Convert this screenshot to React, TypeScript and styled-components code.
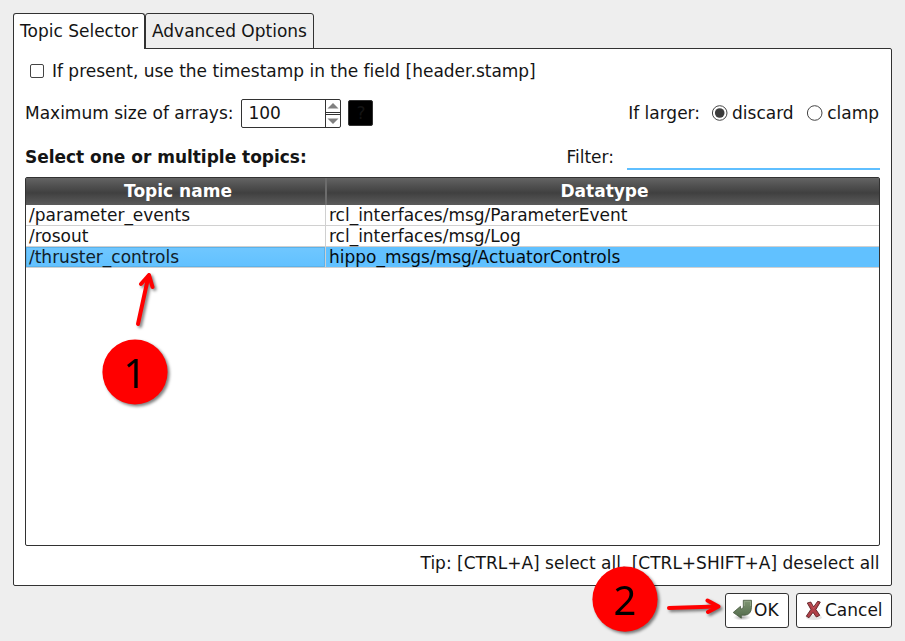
import React from "react";
import styled, { createGlobalStyle, css } from "styled-components";

const GlobalStyle = createGlobalStyle`
  * { box-sizing: border-box; }
  body {
    margin: 0;
    background: #eee;
    font-family: "DejaVu Sans", sans-serif;
    font-size: 17px;
    line-height: 20px;
    color: #141414;
  }
`;

const line = "#323232";

const Dialog = styled.main`
  position: relative;
  width: 905px;
  height: 641px;
  padding: 13px 13px 0;
  display: flex;
  flex-direction: column;
  white-space: nowrap;
  overflow: hidden;
`;

const TabBar = styled.div`
  display: flex;
  height: 36px;
  margin-bottom: -1px;
`;

const Tab = styled.div<{ $active?: boolean }>`
  width: ${(p) => (p.$active ? 132 : 169)}px;
  height: 36px;
  padding: 7px 0 0 6px;
  border: 1px solid ${line};
  border-radius: 3px 3px 0 0;
  ${(p) =>
    p.$active
      ? css`
          background: #fff;
          border-bottom: 0;
          z-index: 1;
        `
      : css`
          background: #eee;
        `}
`;

const Panel = styled.section`
  width: 879px;
  height: 538px;
  padding: 12px 11px 0;
  background: #fff;
  border: 1px solid ${line};
  border-radius: 0 2px 2px 2px;
  display: flex;
  flex-direction: column;
`;

const StampRow = styled.label`
  display: flex;
  align-items: center;
  height: 20px;
  padding-left: 5px;
  gap: 8px;
  letter-spacing: -0.01px;
`;

const CheckBox = styled.span`
  width: 14px;
  height: 14px;
  border: 1px solid #444;
  border-radius: 2px;
`;

const SizeRow = styled.div`
  display: flex;
  align-items: center;
  height: 30px;
  margin-top: 17px;
`;

const SpinBox = styled.div`
  display: flex;
  width: 100px;
  height: 29px;
  margin-left: 8px;
  border: 1px solid ${line};
  border-radius: 2px;
`;

const SpinValue = styled.span`
  flex: 1;
  padding: 3px 0 0 6px;
`;

const Stepper = styled.span`
  display: flex;
  flex-direction: column;
  justify-content: space-between;
  width: 15px;
  border-left: 1px solid ${line};
`;

const Step = styled.span<{ $down?: boolean }>`
  display: flex;
  align-items: center;
  justify-content: center;
  height: 13px;
  border-${(p) => (p.$down ? "top" : "bottom")}: 1px solid ${line};
`;

const HelpButton = styled.span`
  width: 25px;
  height: 26px;
  margin-left: 7px;
  background: #000;
  border: 1px solid #323232;
  border-radius: 2px;
  color: #141414;
  text-align: center;
  line-height: 24px;
`;

const RadioGroup = styled.div`
  display: flex;
  align-items: center;
  margin-left: auto;
  padding-right: 1px;
`;

const Radio = styled.span<{ $gap: number }>`
  display: flex;
  align-items: center;
  gap: 4px;
  margin-left: ${(p) => p.$gap}px;
`;

const FilterRow = styled.div`
  display: flex;
  height: 27px;
  margin-top: 15px;
  padding-top: 4px;
`;

const Title = styled.strong`
  flex: 1;
  letter-spacing: -0.02px;
`;

const FilterField = styled.div`
  width: 253px;
  height: 27px;
  margin: -4px 0 0 13px;
  border-bottom: 2px solid #5fbfff;
`;

const Table = styled.div`
  width: 855px;
  height: 369px;
  margin-top: 7px;
  border: 1px solid ${line};
  border-radius: 2px;
`;

const HeaderRow = styled.div`
  display: grid;
  grid-template-columns: 300px 1fr;
  height: 27px;
  background: linear-gradient(#646464 0, #565656 20%, #404040 55%, #5b5b5b 100%);
  color: #fff;
  font-weight: bold;
  text-align: center;
`;

const HeaderCell = styled.span`
  padding: 3px 0 0 4px;
  & + & {
    margin-left: -1px;
    padding-left: 3px;
    border-left: 2px solid #6c6c6c;
  }
`;

const Row = styled.div<{ $selected?: boolean }>`
  display: grid;
  grid-template-columns: 300px 1fr;
  height: 21px;
  border-bottom: 1px solid #d0d0d0;
  background: ${(p) => (p.$selected ? "#61c1ff" : "#fff")};
  color: ${(p) => (p.$selected ? "#050b10" : "#141414")};
  letter-spacing: -0.01px;
`;

const Cell = styled.span<{ $focus?: boolean }>`
  height: 20px;
  padding-left: 3px;
  &:first-child {
    border-right: 1px solid #d0d0d0;
  }
  ${(p) =>
    p.$focus &&
    css`
      color: #10202a;
      background: linear-gradient(#70c7ff, #61c1ff);
      box-shadow: inset 0 0 0 1px #5ab2ea;
    `}
`;

const Tip = styled.p`
  margin: 7px 0.5px 0 0;
  text-align: right;
`;

const Footer = styled.div`
  display: flex;
  justify-content: flex-end;
  gap: 7px;
  margin-top: 7px;
`;

const Button = styled.button<{ $width: number }>`
  display: flex;
  align-items: center;
  width: ${(p) => p.$width}px;
  height: 35px;
  padding: 0 0 1px 6px;
  gap: 1px;
  background: #fff;
  border: 1px solid ${line};
  border-radius: 3px;
  font: inherit;
  color: inherit;
`;

const Annotation = styled.svg`
  position: absolute;
  left: 0;
  top: 0;
  pointer-events: none;
  filter: drop-shadow(2px 2px 1.5px rgba(0, 0, 0, 0.5));
`;

const BadgeNumber = styled.text`
  font: 40px "Noto Sans", sans-serif;
  text-anchor: middle;
`;

const Badge = ({ x, y, n }: { x: number; y: number; n: number }) => (
  <g>
    <circle cx={x} cy={y} r="32.6" fill="#f00" />
    <BadgeNumber x={x} y={y + 16}>{n}</BadgeNumber>
  </g>
);

const RadioDot = ({ checked }: { checked?: boolean }) => (
  <svg width="16" height="16" viewBox="0 0 16 16">
    <circle cx="7.7" cy="8" r="7.3" fill="#fff" stroke="#444" />
    {checked && <circle cx="7.7" cy="8" r="4.8" fill="#3c3c3c" />}
  </svg>
);

const Triangle = ({ down }: { down?: boolean }) => (
  <svg width="12" height="6" viewBox="0 0 12 6">
    <path d={down ? "M.5 .5H11.5L6 6Z" : "M.5 5.5H11.5L6 0Z"} fill="#808080" />
  </svg>
);

const OkIcon = () => (
  <svg width="21" height="22" viewBox="0 0 21 22">
    <defs>
      <linearGradient id="green" x1="0" y1="0" x2="0" y2="1">
        <stop offset="0" stopColor="#7f9673" />
        <stop offset="1" stopColor="#51694a" />
      </linearGradient>
      <radialGradient id="shade">
        <stop offset="0" stopColor="#777" stopOpacity=".7" />
        <stop offset="1" stopColor="#999" stopOpacity="0" />
      </radialGradient>
    </defs>
    <ellipse cx="10" cy="18.5" rx="9" ry="3" fill="url(#shade)" />
    <path
      d="M11.3 1.3H19.5V8.5Q19 15.8 13 16.2H9.3V19.2L1.2 13.5L8.5 7.3V9.8H9.8Q11 9.6 11.3 8Z"
      fill="url(#green)"
      stroke="#46583f"
      strokeWidth=".8"
      strokeLinejoin="round"
    />
    <path d="M12.3 7V2.3H18.5V7" fill="none" stroke="#a0b395" strokeWidth=".6" />
  </svg>
);

const CancelIcon = () => (
  <svg width="21" height="22" viewBox="0 0 21 22">
    <ellipse cx="11" cy="18.5" rx="8" ry="2.5" fill="#bbb" opacity=".4" />
    <path
      d="M4.3 4L7.8 3L10.6 8L14.7 2.3L17.3 3.1L12.9 10.5L16.8 16.3L13.4 18L10 13.4L6 18.7L3.3 17.2L7.9 10.4Z"
      fill="#b04048"
      stroke="#5d2024"
      strokeWidth=".9"
      strokeLinejoin="round"
    />
    <path d="M5.6 4.7L7.2 4.3L10.5 9.5L14.8 3.8" fill="none" stroke="#cc6268" strokeWidth=".6" />
  </svg>
);

const topics = [
  { name: "/parameter_events", type: "rcl_interfaces/msg/ParameterEvent" },
  { name: "/rosout", type: "rcl_interfaces/msg/Log" },
  { name: "/thruster_controls", type: "hippo_msgs/msg/ActuatorControls", selected: true },
];

export default function App() {
  return (
    <>
      <GlobalStyle />
      <Dialog>
        <TabBar>
          <Tab $active>Topic Selector</Tab>
          <Tab>Advanced Options</Tab>
        </TabBar>
        <Panel>
          <StampRow>
            <CheckBox />
            If present, use the timestamp in the field [header.stamp]
          </StampRow>
          <SizeRow>
            <span>Maximum size of arrays:</span>
            <SpinBox>
              <SpinValue>100</SpinValue>
              <Stepper>
                <Step><Triangle /></Step>
                <Step $down><Triangle down /></Step>
              </Stepper>
            </SpinBox>
            <HelpButton>?</HelpButton>
            <RadioGroup>
              <span>If larger:</span>
              <Radio $gap={12}><RadioDot checked />discard</Radio>
              <Radio $gap={13.5}><RadioDot />clamp</Radio>
            </RadioGroup>
          </SizeRow>
          <FilterRow>
            <Title>Select one or multiple topics:</Title>
            <span>Filter:</span>
            <FilterField />
          </FilterRow>
          <Table>
            <HeaderRow>
              <HeaderCell>Topic name</HeaderCell>
              <HeaderCell>Datatype</HeaderCell>
            </HeaderRow>
            {topics.map((t) => (
              <Row key={t.name} $selected={t.selected}>
                <Cell $focus={t.selected}>{t.name}</Cell>
                <Cell>{t.type}</Cell>
              </Row>
            ))}
          </Table>
          <Tip>Tip: [CTRL+A] select all, [CTRL+SHIFT+A] deselect all</Tip>
        </Panel>
        <Footer>
          <Button $width={64}><OkIcon />OK</Button>
          <Button $width={96}><CancelIcon />Cancel</Button>
        </Footer>
        <Annotation width="905" height="641">
          <g fill="none" stroke="#f00" strokeWidth="4" strokeLinecap="round" strokeLinejoin="round">
            <path d="M138 324L148.5 276" />
            <path d="M141 284L149 275L152.5 287" />
            <path d="M669 608L717 606.5" />
            <path d="M707.5 600.5L718.5 606.5L708 612" />
          </g>
          <Badge x={135} y={372} n={1} />
          <Badge x={625} y={599.2} n={2} />
        </Annotation>
      </Dialog>
    </>
  );
}
